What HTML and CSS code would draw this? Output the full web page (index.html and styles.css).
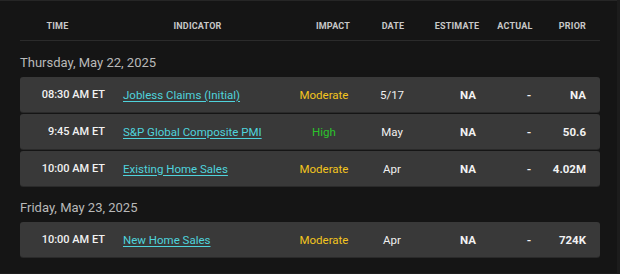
FILE: index.html
```html
<!DOCTYPE html>
<html lang="en">
<head>
    <meta charset="UTF-8">
    <title>Economic Calendar</title>
    <link rel="stylesheet" href="styles.css">
</head>
<body>
    <div id="calendar">
        <div class="head-row">
            <div class="h-time">Time</div>
            <div class="h-ind">Indicator</div>
            <div class="h-center">Impact</div>
            <div class="h-center">Date</div>
            <div class="h-center">Estimate</div>
            <div class="h-center">Actual</div>
            <div class="h-prior">Prior</div>
        </div>

        <div class="day-label first">Thursday, May 22, 2025</div>
        <div class="event-row">
            <div class="c-time">08:30 AM ET</div>
            <div class="c-ind"><a href="#">Jobless Claims (Initial)</a></div>
            <div class="c-center moderate">Moderate</div>
            <div class="c-center c-date">5/17</div>
            <div class="c-center c-val">NA</div>
            <div class="c-center c-val">-</div>
            <div class="c-prior c-val">NA</div>
        </div>
        <div class="event-row">
            <div class="c-time">9:45 AM ET</div>
            <div class="c-ind"><a href="#">S&amp;P Global Composite PMI</a></div>
            <div class="c-center high">High</div>
            <div class="c-center c-date">May</div>
            <div class="c-center c-val">NA</div>
            <div class="c-center c-val">-</div>
            <div class="c-prior c-val">50.6</div>
        </div>
        <div class="event-row">
            <div class="c-time">10:00 AM ET</div>
            <div class="c-ind"><a href="#">Existing Home Sales</a></div>
            <div class="c-center moderate">Moderate</div>
            <div class="c-center c-date">Apr</div>
            <div class="c-center c-val">NA</div>
            <div class="c-center c-val">-</div>
            <div class="c-prior c-val">4.02M</div>
        </div>

        <div class="day-label">Friday, May 23, 2025</div>
        <div class="event-row">
            <div class="c-time">10:00 AM ET</div>
            <div class="c-ind"><a href="#">New Home Sales</a></div>
            <div class="c-center moderate">Moderate</div>
            <div class="c-center c-date">Apr</div>
            <div class="c-center c-val">NA</div>
            <div class="c-center c-val">-</div>
            <div class="c-prior c-val">724K</div>
        </div>
    </div>
</body>
</html>
```

FILE: styles.css
```css
body {
    margin: 0;
    padding: 0;
    background: #1c1c1c;
    font-family: Roboto, "Liberation Sans", Arial, sans-serif;
    color: #fff;
}

#calendar {
    width: 617px;
    height: 273px;
    box-sizing: border-box;
    background: #151515;
    border-top: 1px solid #262626;
    padding: 0 17px 0 20px;
}

.head-row {
    display: grid;
    grid-template-columns: 75px 205px 66px 54px 74px 42px 64px;
    height: 40px;
    align-items: center;
    border-bottom: 1px solid #2b2b2b;
    font-size: 9px;
    font-weight: 700;
    text-transform: uppercase;
    color: #c8c8c8;
    letter-spacing: 0.2px;
    padding-top: 10px;
    box-sizing: border-box;
}

.h-time,
.h-ind,
.h-center {
    text-align: center;
}

.h-prior {
    text-align: right;
    padding-right: 14px;
}

.day-label {
    font-size: 13px;
    color: #b9b9b9;
    padding: 12px 0 6px 0;
    line-height: 16px;
}

.day-label.first {
    padding-top: 14px;
}

.event-row {
    display: grid;
    grid-template-columns: 95px 175px 68px 68px 84px 38px 52px;
    height: 35px;
    align-items: center;
    background: #393939;
    border-radius: 3px;
    margin-bottom: 2px;
    font-size: 11.5px;
    box-shadow: 0 1px 0 #2a2a2a;
}

.c-time {
    text-align: right;
    padding-right: 10px;
    font-size: 11px;
    font-weight: 500;
    color: #f2f2f2;
}

.c-ind {
    padding-left: 8px;
}

.c-ind a {
    color: #4fd3dc;
    text-decoration: underline;
    text-underline-offset: 2px;
}

.c-center {
    text-align: center;
}

.c-prior {
    text-align: right;
    padding-right: 14px;
}

.c-date {
    color: #f0f0f0;
}

.c-val {
    font-weight: 700;
    color: #f2f2f2;
}

.moderate {
    color: #f2c41e;
}

.high {
    color: #2cc42c;
}
```
